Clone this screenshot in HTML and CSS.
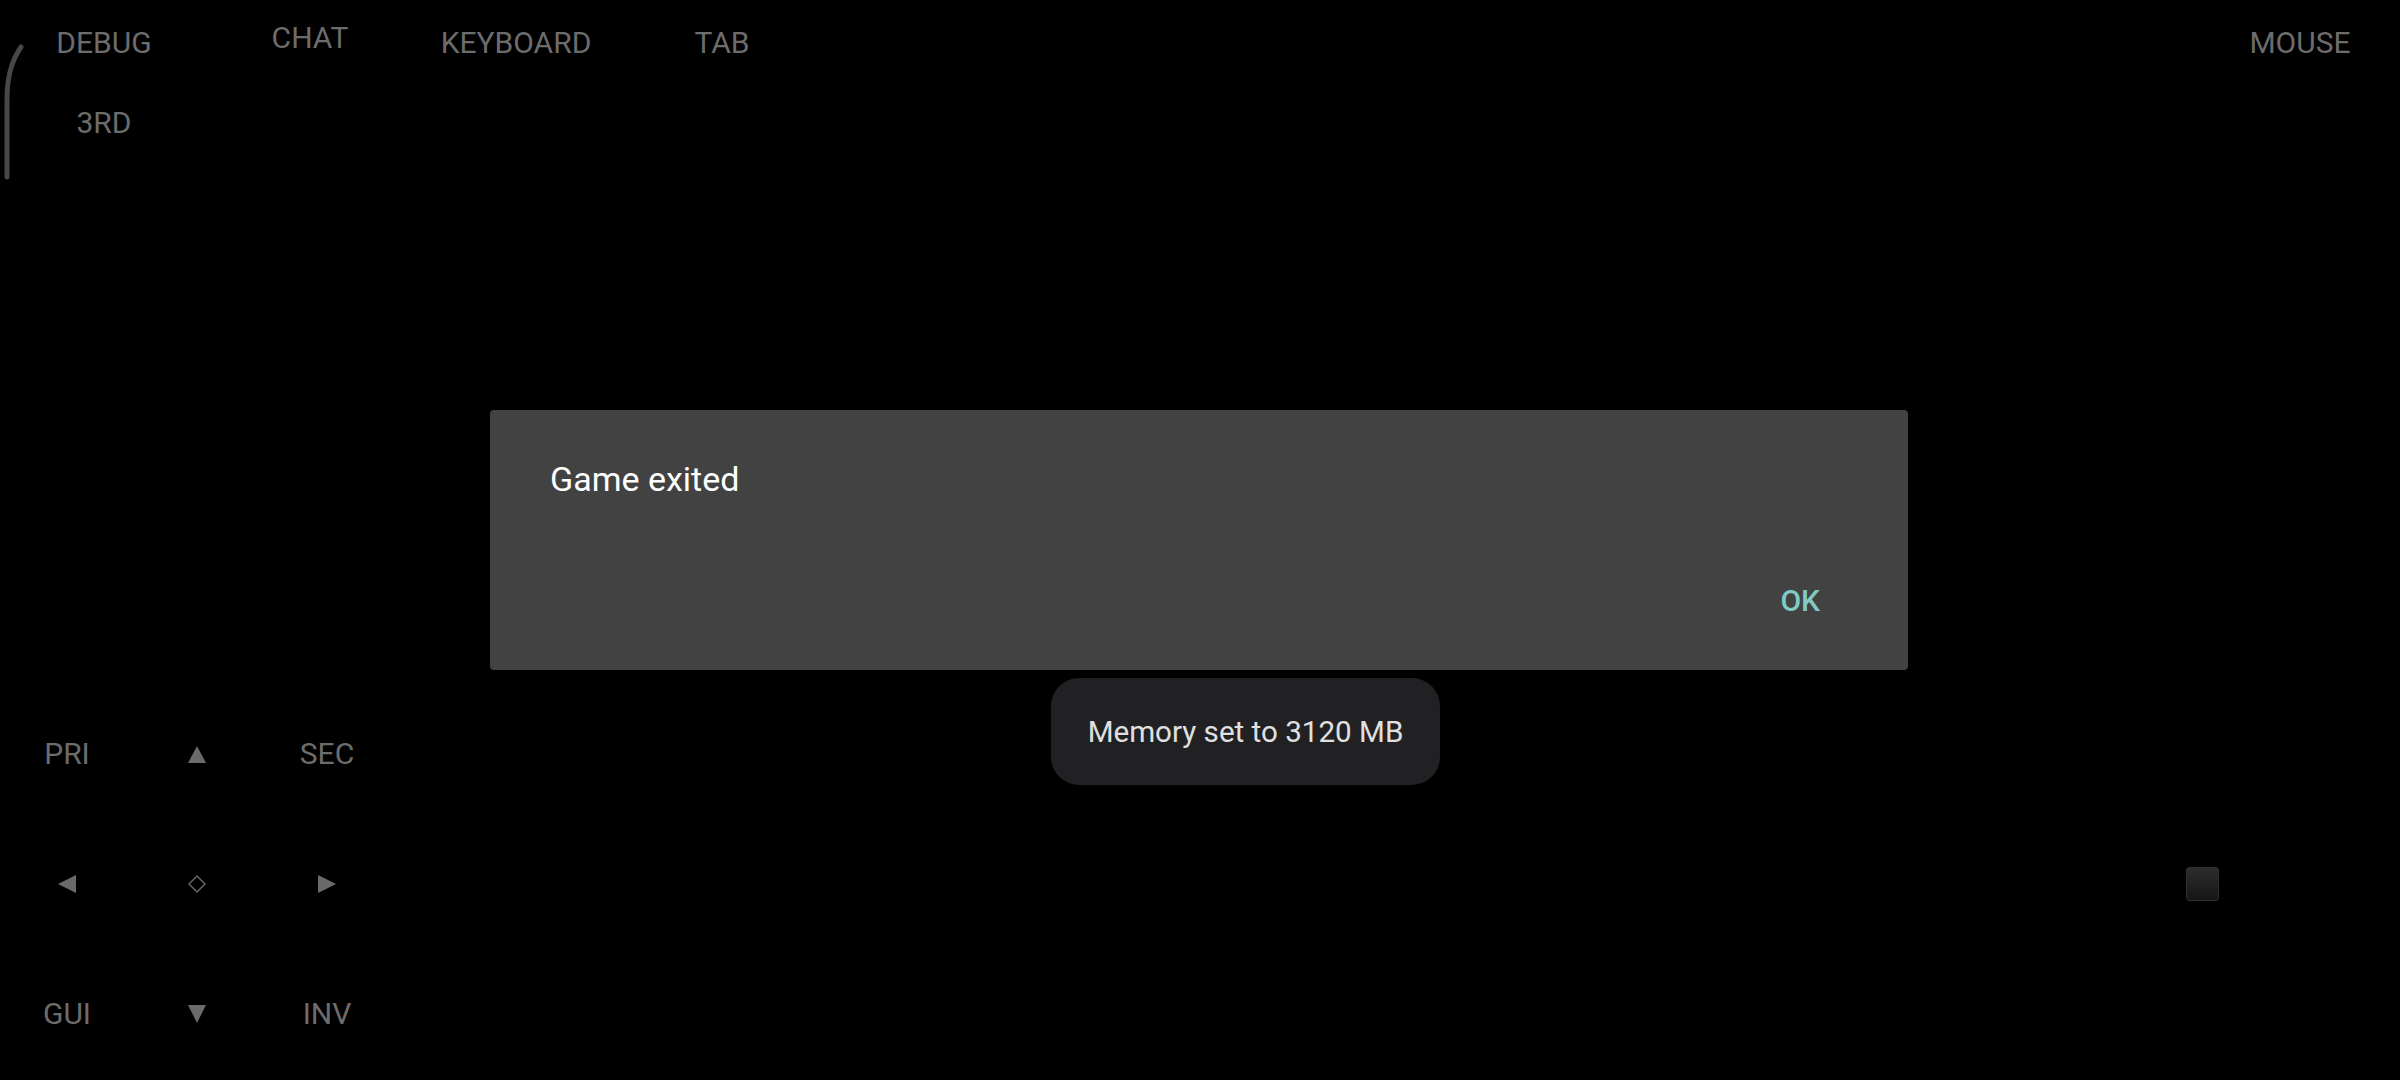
FILE: index.html
```html
<!DOCTYPE html>
<html>
<head>
<meta charset="utf-8">
<link rel="stylesheet" href="styles.css">
</head>
<body>
<div class="stage">
  <svg class="edge-arc" width="30" height="160" viewBox="0 0 30 160">
    <path d="M21 17 C12 30 7 45 7 70 L7 147" fill="none" stroke="#474747" stroke-width="5" stroke-linecap="round"/>
  </svg>

  <div class="top-controls">
    <span class="ctl">DEBUG</span>
    <span class="ctl ctl-raised">CHAT</span>
    <span class="ctl">KEYBOARD</span>
    <span class="ctl">TAB</span>
    <span class="ctl">3RD</span>
  </div>

  <div class="mouse-controls">
    <span class="ctl">MOUSE</span>
  </div>

  <div class="dpad">
    <span class="ctl">PRI</span>
    <span class="ctl"><svg width="18" height="17" viewBox="0 0 18 17"><polygon points="9,0 18,17 0,17" fill="#6a6a6a"/></svg></span>
    <span class="ctl">SEC</span>
    <span class="ctl"><svg width="18" height="18" viewBox="0 0 18 18"><polygon points="0,9 18,0 18,18" fill="#6a6a6a"/></svg></span>
    <span class="ctl"><svg width="18" height="18" viewBox="0 0 18 18"><polygon points="9,1 17,9 9,17 1,9" fill="none" stroke="#6a6a6a" stroke-width="1.4"/></svg></span>
    <span class="ctl"><svg width="18" height="18" viewBox="0 0 18 18"><polygon points="18,9 0,0 0,18" fill="#6a6a6a"/></svg></span>
    <span class="ctl">GUI</span>
    <span class="ctl"><svg width="18" height="18" viewBox="0 0 18 18"><polygon points="0,0 18,0 9,18" fill="#6a6a6a"/></svg></span>
    <span class="ctl">INV</span>
  </div>

  <div class="joy-knob"></div>

  <div class="dialog">
    <div class="dialog-title">Game exited</div>
    <div class="dialog-actions"><span class="dialog-btn">OK</span></div>
  </div>

  <div class="toast">Memory set to 3120 MB</div>
</div>
</body>
</html>
```

FILE: styles.css
```css
html, body {
  margin: 0;
  padding: 0;
  background: #000;
}
body {
  font-family: Roboto, "Noto Sans", sans-serif;
  width: 2400px;
  height: 1080px;
  overflow: hidden;
}
.stage {
  position: relative;
  width: 2400px;
  height: 1080px;
  background: #000;
}
.edge-arc {
  position: absolute;
  left: 0;
  top: 30px;
}
.ctl {
  display: flex;
  align-items: center;
  justify-content: center;
  color: #6c6c6c;
  font-size: 30px;
  line-height: 30px;
  height: 30px;
  white-space: nowrap;
}
.top-controls {
  position: absolute;
  left: 1px;
  top: 28px;
  display: grid;
  grid-template-columns: repeat(4, 206px);
  row-gap: 50px;
}
.ctl-raised {
  margin-top: -5px;
}
.mouse-controls {
  position: absolute;
  left: 2200px;
  top: 28px;
  width: 200px;
  display: flex;
  justify-content: center;
}
.dpad {
  position: absolute;
  left: 2px;
  top: 689px;
  display: grid;
  grid-template-columns: repeat(3, 130px);
  grid-template-rows: repeat(3, 130px);
  align-items: center;
  justify-items: center;
}
.dpad .ctl {
  width: 130px;
}
.joy-knob {
  position: absolute;
  left: 2186px;
  top: 867px;
  width: 31px;
  height: 32px;
  border-radius: 3px;
  border: 1px solid #2e2e2e;
  background: linear-gradient(#2c2c2c, #161616);
}
.dialog {
  position: absolute;
  left: 490px;
  top: 410px;
  width: 1418px;
  height: 260px;
  box-sizing: border-box;
  background: #424242;
  border-radius: 4px;
  padding: 52px 88px 0 60px;
  display: flex;
  flex-direction: column;
}
.dialog-title {
  color: #ffffff;
  font-size: 34px;
  line-height: 34px;
}
.dialog-actions {
  display: flex;
  justify-content: flex-end;
  margin-top: 90px;
}
.dialog-btn {
  color: #80cbc4;
  font-size: 30px;
  line-height: 30px;
  font-weight: 500;
}
.toast {
  position: absolute;
  left: 1051px;
  top: 678px;
  width: 389px;
  height: 107px;
  box-sizing: border-box;
  border-radius: 28px;
  background: #212123;
  color: #e0e0e0;
  font-size: 29.6px;
  display: flex;
  align-items: center;
  justify-content: center;
}
```
